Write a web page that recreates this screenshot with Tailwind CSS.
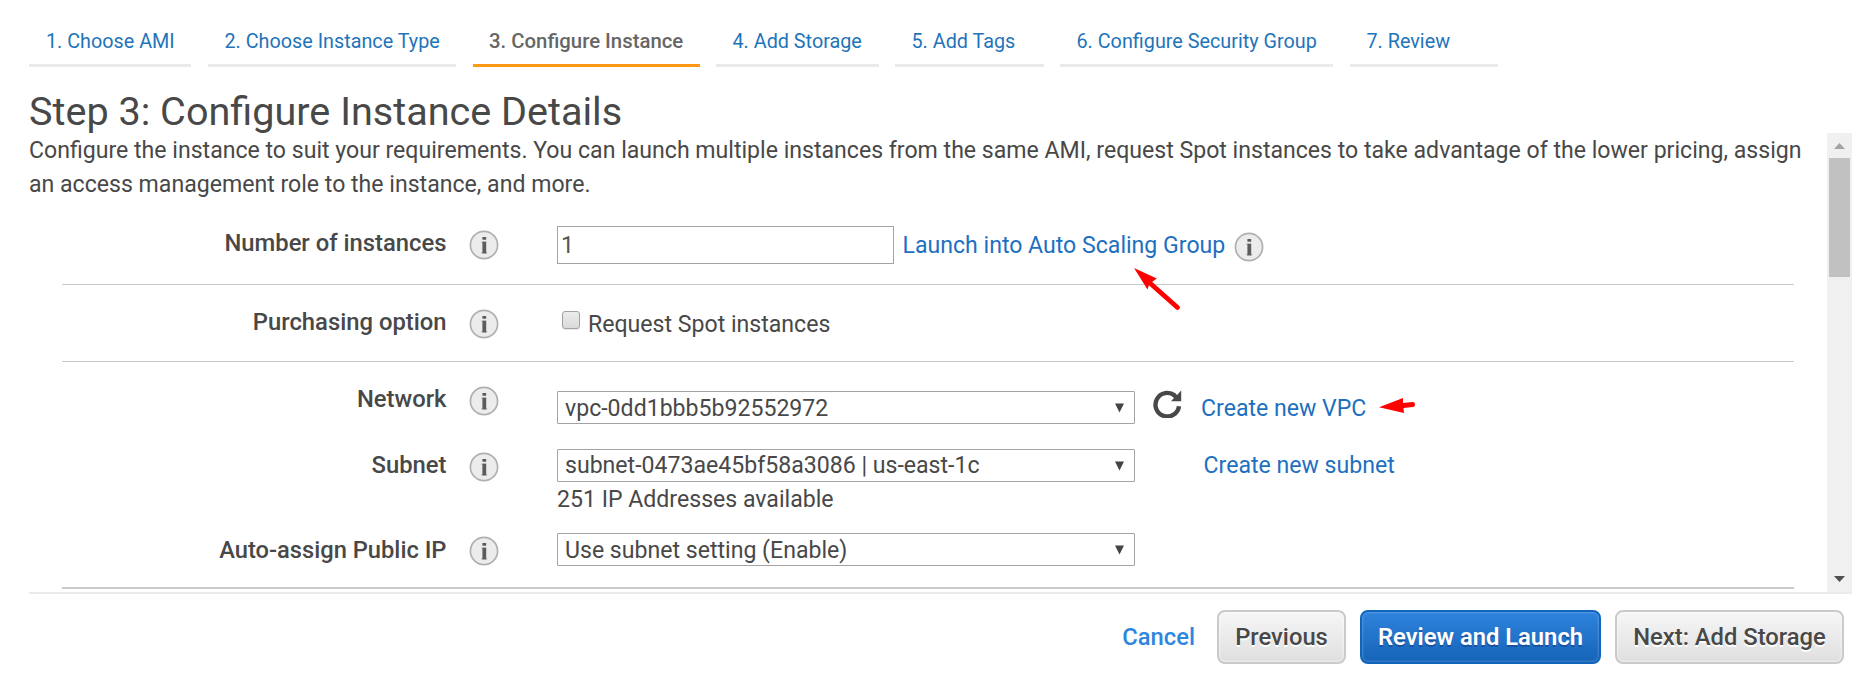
<!DOCTYPE html>
<html lang="en">
<head>
<meta charset="utf-8">
<title>Step 3: Configure Instance Details</title>
<script src="https://cdn.jsdelivr.net/npm/@tailwindcss/browser@4"></script>
</head>
<body class="relative h-[693px] overflow-hidden bg-white font-[Roboto,sans-serif] text-[23.1px] leading-[26px] text-[#484848]">

<svg class="hidden">
  <symbol id="info" viewBox="0 0 30 30">
    <circle cx="15" cy="15" r="13.600" fill="#ececec" stroke="#b0b0b0" stroke-width="1.700"/>
    <rect x="13.400" y="7" width="3.800" height="2.800" rx=".6" fill="#5c5c5c"/>
    <path d="M12.400 11.600h1v1.500h-1zM12.400 22h5.800v1.400h-5.800z" fill="#b4b4b4"/>
    <rect x="13.400" y="11.600" width="3.800" height="11.800" fill="#5c5c5c"/>
  </symbol>
</svg>

<nav class="flex h-[67px] pl-[29px] pt-[29px] text-[19.8px] leading-[26px] whitespace-nowrap text-[#1f74ba]">
  <a class="mr-[17px] w-[162px] border-b-3 border-[#eaeaea] pl-[17px]">1. Choose AMI</a>
  <a class="mr-[17px] w-[248px] border-b-3 border-[#eaeaea] pl-[16.5px]">2. Choose Instance Type</a>
  <a class="mr-4 w-[227px] border-b-3 border-[#ff9913] pl-[16px] text-[20.35px] leading-[25px] font-medium text-[#666666]">3. Configure Instance</a>
  <a class="mr-4 w-[163px] border-b-3 border-[#eaeaea] pl-[16.5px]">4. Add Storage</a>
  <a class="mr-4 w-[149px] border-b-3 border-[#eaeaea] pl-[16.5px]">5. Add Tags</a>
  <a class="mr-[17px] w-[273px] border-b-3 border-[#eaeaea] pl-[16.5px]">6. Configure Security Group</a>
  <a class="w-[148px] border-b-3 border-[#eaeaea] pl-[16.5px]">7. Review</a>
</nav>

<h1 class="h-[66px] pl-[29px] pt-[23px] text-[39.6px] leading-[44px]">Step 3: Configure Instance Details</h1>

<main class="ml-[29px] flex h-[461px] w-[1823px] border-b-2 border-[#ebebeb]">
  <div class="w-[1798px]">
    <p class="h-[68px] pt-px leading-[34px] whitespace-nowrap">Configure the instance to suit your requirements. You can launch multiple instances from the same AMI, request Spot instances to take advantage of the lower pricing, assign<br>an access management role to the instance, and more.</p>

    <div class="ml-[33px] w-[1732px]">
      <div class="flex h-[84px] items-start border-b border-[#c8c8c8]">
        <div class="mt-[29px] w-[384.5px] text-right text-[23.8px] font-medium">Number of instances</div>
        <svg class="mt-[29px] ml-[22.5px] size-[30px]"><use href="#info"/></svg>
        <div class="mt-[25px] ml-[58px] flex h-[38px] w-[337px] items-center border border-[#a3a3a3] pt-[2px] pl-[3px] text-[#555]">1</div>
        <a class="mt-[32px] ml-[8.5px] w-[321.5px] whitespace-nowrap text-[#1e6fc0]">Launch into Auto Scaling Group</a>
        <svg class="mt-[31px] ml-[10px] size-[30px]"><use href="#info"/></svg>
      </div>

      <div class="flex h-[77px] items-start border-b border-[#c8c8c8]">
        <div class="mt-[24px] w-[384.5px] text-right text-[23.8px] font-medium">Purchasing option</div>
        <svg class="mt-[24px] ml-[22.5px] size-[30px]"><use href="#info"/></svg>
        <div class="mt-[26px] ml-[63px] size-[18px] rounded-[3px] border border-[#a2a2a2] bg-linear-to-b from-[#ececec] to-[#dadada] shadow-[0_1px_1px_#00000018]"></div>
        <div class="mt-[27px] ml-[8px] whitespace-nowrap">Request Spot instances</div>
      </div>

      <div class="h-[227px] border-b-2 border-[#cacaca]">
        <div class="flex h-[58px] items-start">
          <div class="mt-[24px] w-[384.5px] text-right text-[23.8px] font-medium">Network</div>
          <svg class="mt-[24px] ml-[22.5px] size-[30px]"><use href="#info"/></svg>
          <div class="mt-[29px] ml-[58px] flex h-[33px] w-[578px] items-start justify-between rounded-[1px] border border-[#a3a3a3] pt-[4px] pl-[7px] pr-[10px]">vpc-0dd1bbb5b92552972<svg class="mt-[7px] h-[10px] w-[9px]" viewBox="0 0 9 10"><path d="M0 .5h9L4.5 9.500z" fill="#444"/></svg></div>
          <svg class="mt-[27px] ml-[18px] size-[29px]" viewBox="0 0 29 29"><path d="M21.800 6.600A11.800 11.800 0 1 0 26 17.300" fill="none" stroke="#484848" stroke-width="4.400"/><path d="M28.200 1.600v10.600H18l3-3.100-2.700-2.700 3-3 2.800 2.500z" fill="#484848"/></svg>
          <a class="mt-[34px] ml-[19px] whitespace-nowrap text-[#1e6fc0]">Create new VPC</a>
        </div>
        <div class="flex h-[84px] items-start">
          <div class="mt-[32px] w-[384.5px] text-right text-[23.8px] font-medium">Subnet</div>
          <svg class="mt-[32px] ml-[22.5px] size-[30px]"><use href="#info"/></svg>
          <div class="mt-[29px] ml-[58px] w-[578px]">
            <div class="flex h-[33px] items-start justify-between rounded-[1px] border border-[#a3a3a3] pt-[3px] pl-[7px] pr-[10px]">subnet-0473ae45bf58a3086 | us-east-1c<svg class="mt-[8px] h-[10px] w-[9px]" viewBox="0 0 9 10"><path d="M0 .5h9L4.5 9.500z" fill="#444"/></svg></div>
            <div class="mt-[5px] whitespace-nowrap">251 IP Addresses available</div>
          </div>
          <a class="mt-[33px] ml-[68.500px] whitespace-nowrap text-[#1e6fc0]">Create new subnet</a>
        </div>
        <div class="flex items-start">
          <div class="mt-[33px] w-[384.5px] text-right text-[23.7px] font-medium">Auto-assign Public IP</div>
          <svg class="mt-[32px] ml-[22.5px] size-[30px]"><use href="#info"/></svg>
          <div class="mt-[29px] ml-[58px] flex h-[33px] w-[578px] items-start justify-between rounded-[1px] border border-[#a3a3a3] pt-[4px] pl-[7px] pr-[10px]">Use subnet setting (Enable)<svg class="mt-[7px] h-[10px] w-[9px]" viewBox="0 0 9 10"><path d="M0 .5h9L4.5 9.500z" fill="#444"/></svg></div>
        </div>
      </div>
    </div>
  </div>

  <div class="flex w-[25px] flex-col items-center bg-[#f0f0f0] pt-[10px] pb-[10px]">
    <svg class="h-[6px] w-[11px]" viewBox="0 0 11 6"><path d="M5.500 0L11 6H0z" fill="#a3a3a3"/></svg>
    <div class="mt-[9px] h-[119px] w-[21px] bg-[#c1c1c1]"></div>
    <svg class="mt-auto h-[6px] w-[11px] shrink-0" viewBox="0 0 11 6"><path d="M0 0h11L5.500 6z" fill="#505050"/></svg>
  </div>
</main>

<footer class="mr-[19px] flex h-[70px] items-end justify-end text-[23.75px] font-medium whitespace-nowrap">
  <a class="mb-[14px] mr-[22px] text-[#2e86de]">Cancel</a>
  <div class="mr-[14px] flex h-[54px] w-[129px] items-center justify-center rounded-[8px] border-2 border-[#cacaca] bg-linear-to-b from-[#f6f6f6] to-[#dfdfdf] shadow-[inset_0_0_2px_1px_#ffffff80] [text-shadow:0_2px_0_#fff]">Previous</div>
  <div class="mr-[14px] flex h-[54px] w-[241px] items-center justify-center rounded-[8px] border-2 border-[#1166bb] bg-linear-to-b from-[#2f83dc] to-[#1464b8] font-semibold text-white shadow-[inset_0_0_2px_1px_#ffffff30] [text-shadow:0_2px_0_#1a50a0]">Review and Launch</div>
  <div class="flex h-[54px] w-[229px] items-center justify-center rounded-[8px] border-2 border-[#cacaca] bg-linear-to-b from-[#f6f6f6] to-[#dfdfdf] shadow-[inset_0_0_2px_1px_#ffffff80] [text-shadow:0_2px_0_#fff]">Next: Add Storage</div>
</footer>

<!-- Annotation arrows laid over the form -->
<svg class="absolute left-[1130px] top-[264px] h-[50px] w-[55px]" viewBox="1130 264 55 50">
  <path d="M1134 268l22.800 10.500-4.800 3.500-3 3-1.500 4.500z" fill="#f00"/>
  <path d="M1151 284l26.500 23.500" stroke="#f00" stroke-width="4.800" stroke-linecap="round"/>
</svg>
<svg class="absolute left-[1375px] top-[394px] h-[22px] w-[44px]" viewBox="1375 394 44 22">
  <path d="M1379 407.300L1403 398v5l1 10z" fill="#f00"/>
  <path d="M1401 405.700l11.500-1.100" stroke="#f00" stroke-width="5" stroke-linecap="round"/>
</svg>
</body>
</html>
